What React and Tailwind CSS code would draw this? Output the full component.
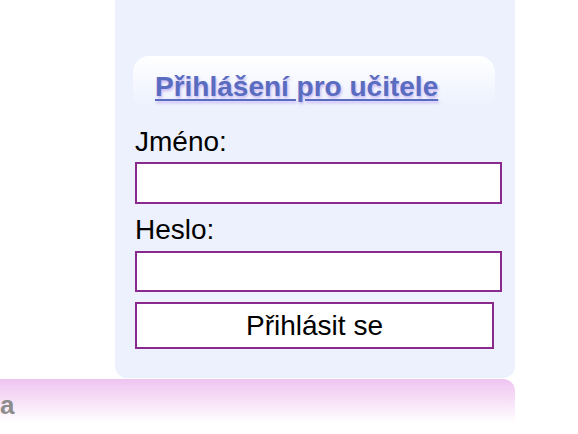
import React from 'react';

const App = () => {
  return (
    <div className="w-[578px] h-[434px] overflow-hidden bg-white font-['Liberation_Sans',Arial,sans-serif]">
      {/* Login panel */}
      <div className="ml-[115px] w-[400px] rounded-b-xl bg-[#ecf1fd] pt-[56px] pl-[18px] pb-[29px]">
        <div className="w-[362px] h-[52px] rounded-2xl bg-linear-to-b from-white to-[#ecf1fd] pl-[22px] pt-[15px]">
          <a
            href="#"
            className="block text-[28px] leading-[32px] font-bold text-[#5a6cc0] underline underline-offset-[3px] [text-shadow:1px_2px_3px_#c4b2f2]"
          >
            Přihlášení pro učitele
          </a>
        </div>

        <form className="pl-[2px]" onSubmit={(e) => e.preventDefault()}>
          <label className="block mt-[18px] text-[28px] leading-[32px] text-black">Jméno:</label>
          <input
            type="text"
            className="block mt-[4px] w-[367px] h-[42px] border-2 border-[#8b2a8e] bg-white outline-none"
          />
          <label className="block mt-[10px] text-[28px] leading-[32px] text-black">Heslo:</label>
          <input
            type="password"
            className="block mt-[5px] w-[367px] h-[41px] border-2 border-[#8b2a8e] bg-white outline-none"
          />
          <button
            type="submit"
            className="block mt-[10px] w-[359px] h-[47px] border-2 border-[#8b2a8e] bg-white text-[28px] leading-[32px] text-black"
          >
            Přihlásit se
          </button>
        </form>
      </div>

      {/* Bottom menu bar */}
      <div className="mt-px w-[515px] h-[44px] rounded-tr-xl bg-linear-to-b from-[#eec4f0] to-white pt-[11px]">
        <span className="block text-[26px] leading-[30px] font-bold text-[#8c8c8c]">a</span>
      </div>
    </div>
  );
};

export default App;
